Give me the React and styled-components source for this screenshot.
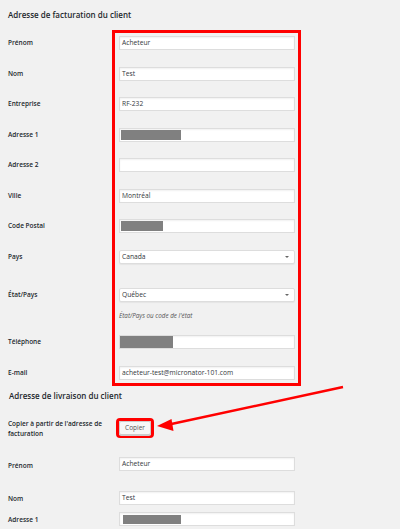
import React from "react";
import styled, { createGlobalStyle } from "styled-components";

const GlobalStyle = createGlobalStyle`
  body {
    margin: 0;
    background: #f1f1f1;
    font-family: "Open Sans", "Noto Sans", sans-serif;
    color: #23282d;
  }
`;

const Page = styled.div`
  position: relative;
  width: 400px;
  height: 529px;
  overflow: hidden;
  box-sizing: border-box;
  padding: 10px 0 0 8px;
`;

const SectionTitle = styled.h2`
  margin: ${(p) => p.$mt || 0}px 0 0 ${(p) => p.$ml || 0}px;
  font-size: 8px;
  font-weight: 600;
  line-height: 10px;
  color: #23282d;
`;

const FormGrid = styled.div`
  display: grid;
  grid-template-columns: 111px 176px;
  row-gap: 16.5px;
  margin-top: 16px;
`;

const Label = styled.div`
  grid-column: 1;
  grid-row: ${(p) => p.$row};
  margin-top: ${(p) => p.$mt || 0}px;
  font-size: 6.5px;
  font-weight: 600;
  line-height: 14px;
  color: #23282d;
`;

const Field = styled.div`
  grid-column: 2;
  grid-row: ${(p) => p.$row};
  margin-top: ${(p) => p.$mt || 0}px;
`;

const Highlight = styled.div`
  grid-column: 2;
  grid-row: 1 / span ${(p) => p.$rows};
  margin: -6px -6px -6px -7px;
  border: 3px solid #ff0000;
  pointer-events: none;
`;

const Input = styled.div`
  position: relative;
  display: flex;
  align-items: center;
  height: 14px;
  box-sizing: border-box;
  padding: 0 ${(p) => (p.$redact ? 1 : 2)}px;
  background: #fff;
  border: 1px solid #dddddd;
  box-shadow: inset 0 1px 2px rgba(0, 0, 0, 0.06);
  font-size: 6.7px;
  line-height: 12px;
  color: #32373c;
  white-space: nowrap;
`;

const SelectBox = styled(Input)`
  border-radius: 2px;
  box-shadow: 0 1px 1px rgba(0, 0, 0, 0.05);
  &::after {
    content: "";
    position: absolute;
    right: 5px;
    top: 5px;
    border-left: 2px solid transparent;
    border-right: 2px solid transparent;
    border-top: 2px solid #666;
  }
`;

const Redact = styled.span`
  display: block;
  width: ${(p) => p.$w}px;
  height: ${(p) => p.$h || 10}px;
  margin-left: ${(p) => p.$ml || 0}px;
  background: #808080;
`;

const Help = styled.p`
  margin: 8.5px 0 -2px;
  font-size: 6.3px;
  font-style: italic;
  line-height: 10px;
  color: #555;
`;

const Row = styled.div`
  display: grid;
  grid-template-columns: 111px 176px;
  align-items: start;
  margin-top: ${(p) => p.$mt || 0}px;
`;

const RowLabel = styled.div`
  font-size: 6.5px;
  font-weight: 600;
  line-height: ${(p) => p.$lh || 14}px;
  padding-top: ${(p) => p.$pt || 0}px;
  color: #23282d;
`;

const CopyFrame = styled.div`
  display: inline-flex;
  justify-self: start;
  margin: -1px 0 0 -3px;
  border: 3px solid #ff0000;
  border-radius: 4px;
`;

const Button = styled.button`
  width: 32px;
  height: 14px;
  padding: 0;
  box-sizing: border-box;
  background: #f7f7f7;
  border: 1px solid #cccccc;
  border-radius: 2px;
  box-shadow: 0 1px 0 #cccccc;
  font-family: inherit;
  font-size: 6.5px;
  line-height: 12px;
  color: #555;
`;

const Annotation = styled.svg`
  position: absolute;
  top: 0;
  left: 0;
  width: 400px;
  height: 529px;
  pointer-events: none;
`;

const billing = [
  { label: "Prénom", value: "Acheteur" },
  { label: "Nom", value: "Test" },
  { label: "Entreprise", value: "RF-232" },
  { label: "Adresse 1", redact: 60 },
  { label: "Adresse 2", value: "" },
  { label: "Ville", value: "Montréal" },
  { label: "Code Postal", redact: 42 },
  { label: "Pays", value: "Canada", select: true },
  { label: "État/Pays", value: "Québec", select: true, extra: 8, help: "État/Pays ou code de l'état" },
  { label: "Téléphone", redact: 53, h: 12, ml: -1 },
  { label: "E-mail", value: "acheteur-test@micronator-101.com" },
];

function FieldControl({ item }) {
  if (item.select) return <SelectBox>{item.value}</SelectBox>;
  if (item.redact)
    return (
      <Input $redact>
        <Redact $w={item.redact} $h={item.h} $ml={item.ml} />
      </Input>
    );
  return <Input>{item.value}</Input>;
}

export default function App() {
  return (
    <Page>
      <GlobalStyle />
      <SectionTitle>Adresse de facturation du client</SectionTitle>
      <FormGrid>
        {billing.map((item, i) => (
          <React.Fragment key={item.label}>
            <Label $row={i + 1} $mt={item.extra}>
              {item.label}
            </Label>
            <Field $row={i + 1} $mt={item.extra}>
              <FieldControl item={item} />
              {item.help && <Help>{item.help}</Help>}
            </Field>
          </React.Fragment>
        ))}
        <Highlight $rows={billing.length} />
      </FormGrid>

      <SectionTitle $mt={11} $ml={1}>
        Adresse de livraison du client
      </SectionTitle>
      <Row $mt={18.5}>
        <RowLabel $lh={10}>Copier à partir de l'adresse de facturation</RowLabel>
        <CopyFrame>
          <Button type="button">Copier</Button>
        </CopyFrame>
      </Row>
      <Row $mt={18}>
        <RowLabel $pt={1.5}>Prénom</RowLabel>
        <Input>Acheteur</Input>
      </Row>
      <Row $mt={18}>
        <RowLabel $pt={1.5}>Nom</RowLabel>
        <Input>Test</Input>
      </Row>
      <Row $mt={6}>
        <RowLabel $pt={1}>Adresse 1</RowLabel>
        <Input $redact>
          <Redact $w={58} $h={9} $ml={2} />
        </Input>
      </Row>

      <Annotation viewBox="0 0 400 529">
        <line x1="343" y1="387" x2="169" y2="424.5" stroke="#ff0000" strokeWidth="2.5" />
        <polygon points="157,426 171.5,419 173.5,431" fill="#ff0000" />
      </Annotation>
    </Page>
  );
}
